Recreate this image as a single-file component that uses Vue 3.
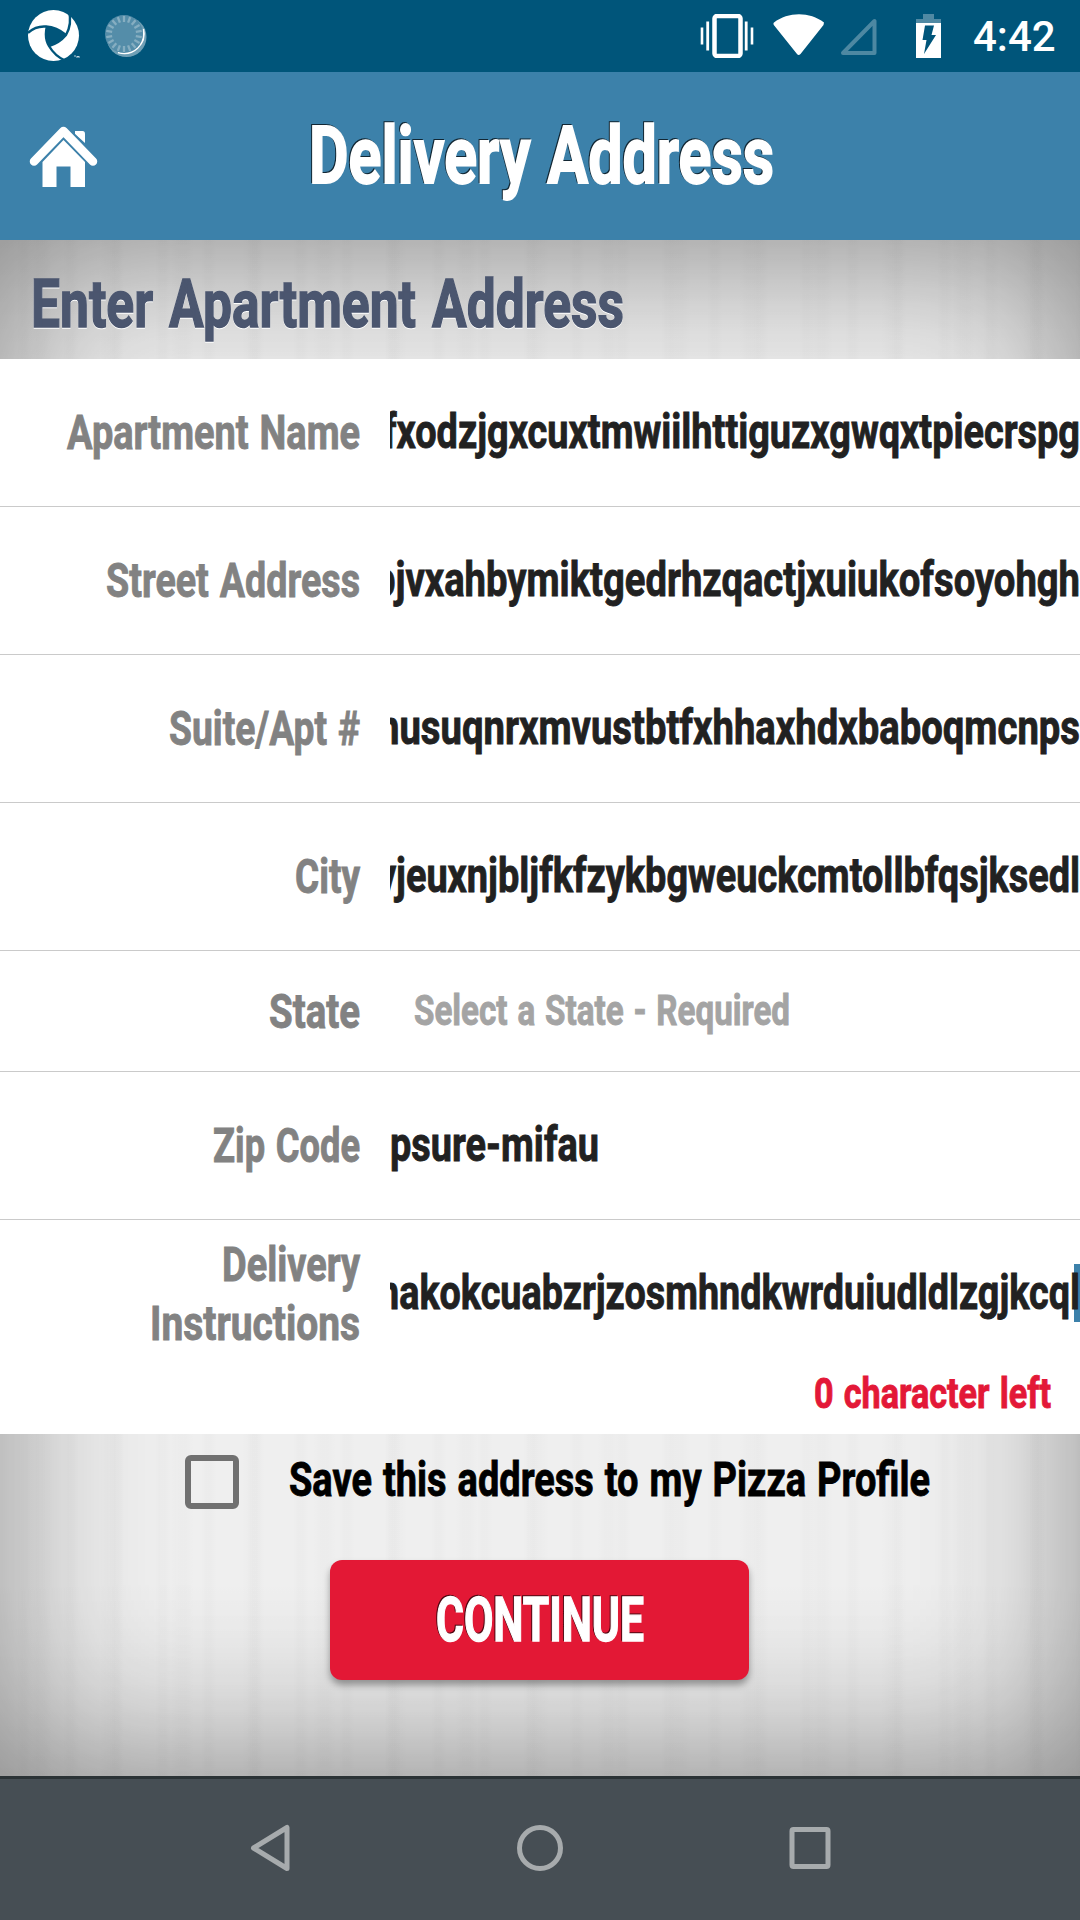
<script setup>
import { h } from 'vue'

// One line of condensed lettering, fitted to a fixed width.
const Fit = (props) => {
  const { text, w, size } = props
  return h('svg', { class: 'fit', width: w, height: size * 1.2 }, [
    h('text', {
      x: 0,
      y: size * 0.94,
      'font-size': size,
      textLength: w,
      lengthAdjust: 'spacingAndGlyphs',
    }, text),
  ])
}
Fit.props = ['text', 'w', 'size']

const label = 49
const rows = [
  { name: [['Apartment Name', 293]], value: 'fxodzjgxcuxtmwiilhttiguzxgwqxtpiecrspg', w: 697 },
  { name: [['Street Address', 254]], value: 'pjvxahbymiktgedrhzqactjxuiukofsoyohgh', w: 706 },
  { name: [['Suite/Apt #', 191]], value: 'nusuqnrxmvustbtfxhhaxhdxbaboqmcnps', w: 702 },
  { name: [['City', 65]], value: 'yjeuxnjbljfkfzykbgweuckcmtollbfqsjksedl', w: 703 },
  { name: [['State', 91]], select: 'Select a State - Required', w: 376 },
  { name: [['Zip Code', 147]], value: 'psure-mifau', w: 209, start: true },
  { name: [['Delivery', 138], ['Instructions', 210]], value: 'nakokcuabzrjzosmhndkwrduiudldlzgjkcql', w: 702, caret: true },
]
const ticks = Array.from({ length: 18 }, (_, i) => i * 20)
</script>

<template>
  <div class="screen">
    <div class="status">
      <svg class="swirl" width="52" height="52" viewBox="0 0 52 52">
        <circle cx="25.5" cy="25.5" r="25.5" fill="#fff" />
        <g fill="none" stroke="#00557a" stroke-width="2.4">
          <path d="M0 23C5 18 11 16 18 16.5C26 17 32 20 38 25" />
          <path d="M41 1C43 9 42 18 38 25C33 31 28 34 21 36" />
          <path d="M19 16C17 24 18 31 21 36C25 43 31 48 38 51" />
        </g>
        <path d="M19 16.5C26 17 32 20 38 25C33 31 28 34 21 36C18 31 17.500 24 19 16.500Z" fill="#00557a" />
        <path d="M46 46h2M49 48v-2l1 1 1-1v2" stroke="#dfeaf0" stroke-width=".8" fill="none" />
      </svg>
      <svg class="spin" width="44" height="44" viewBox="0 0 44 44">
        <circle cx="22.500" cy="23" r="20" fill="#6f9fb5" />
        <path d="M39.500 15A20 20 0 0 1 14 38.500A21 21 0 0 0 39.500 15Z" fill="#fff" stroke="#fff" stroke-width="1.500" />
        <circle cx="20" cy="20" r="19" fill="#548da9" />
        <g stroke="#86aec1" stroke-width="2.300">
          <line v-for="a in ticks" :key="a" x1="20" y1="2" x2="20" y2="8" :transform="`rotate(${a} 20 20)`" />
        </g>
      </svg>
      <span class="grow"></span>
      <svg width="54" height="44" viewBox="0 0 54 44" fill="none" stroke="#fff">
        <rect x="14.500" y="2" width="26" height="40" rx="2.500" stroke-width="4.500" />
        <path d="M2 13.500v17M52 13.500v17" stroke-width="2.600" />
        <path d="M7.700 7.500v29M46.200 7.500v29" stroke-width="2.800" />
      </svg>
      <svg class="wifi" width="52" height="42" viewBox="0 0 52 42">
        <path d="M1 8.500C15 -2.500 37 -2.500 51 8.500L50.500 11L27.500 40Q25.500 42 24 40L.8 11Q0 9.500 1 8.500Z" fill="#fff" />
      </svg>
      <svg class="signal" width="38" height="38" viewBox="0 0 38 38">
        <path d="M34.500 3V35H3Z" fill="none" stroke="#4d88a2" stroke-width="4" stroke-linejoin="round" />
      </svg>
      <svg class="battery" width="25" height="44" viewBox="0 0 25 44">
        <path d="M7 0h11v5h7v4H0V5h7Z" fill="#5089a3" />
        <path d="M0 9h25v35H0Z" fill="#fff" />
        <path d="M9 11.500H18L15.500 21H20L8 40L10.500 26H6.500Z" fill="#00557a" />
      </svg>
      <span class="time">4:42</span>
    </div>

    <header class="bar">
      <svg class="home" width="70" height="64" viewBox="0 0 70 64" fill="#fff">
        <path d="M46 6h7.500q2.500 0 2.500 3v9L46 9Z" />
        <path d="M5 36.500L34.500 6L64 36.500" fill="none" stroke="#3c81aa" stroke-width="12" stroke-linejoin="round" />
        <path d="M34.500 15L56 37V62H41.500V41.500H27.500V62H13.500V37Z" />
        <path d="M5 36.500L34.500 6L64 36.500" fill="none" stroke="#fff" stroke-width="8.500" stroke-linecap="round" stroke-linejoin="round" />
      </svg>
      <Fit class="title" text="Delivery Address" :w="465" :size="79" />
    </header>

    <main class="paper">
      <h1 class="heading"><Fit text="Enter Apartment Address" :w="593" :size="67" /></h1>

      <section class="form">
        <div v-for="r in rows" :key="r.name[0][0]" class="row" :class="{ short: r.select, last: r.caret }">
          <div class="name">
            <Fit v-for="n in r.name" :key="n[0]" :text="n[0]" :w="n[1]" :size="label" />
          </div>
          <div v-if="r.select" class="select"><Fit :text="r.select" :w="r.w" :size="42" /></div>
          <div v-else class="value" :class="{ start: r.start, caret: r.caret }">
            <Fit :text="r.value" :w="r.w" :size="label" />
          </div>
        </div>
        <div class="count"><Fit text="0 character left" :w="237" :size="42" /></div>
      </section>

      <div class="save">
        <span class="box"></span>
        <Fit class="savetext" text="Save this address to my Pizza Profile" :w="641" :size="label" />
      </div>
      <div class="button"><Fit text="CONTINUE" :w="208" :size="62" /></div>
    </main>

    <nav class="nav">
      <svg width="46" height="48" viewBox="0 0 46 48"><path d="M40 3.500V44.500L6.500 24Z" /></svg>
      <svg width="46" height="48" viewBox="0 0 46 48"><circle cx="23" cy="24" r="20.500" /></svg>
      <svg width="46" height="48" viewBox="0 0 46 48"><rect x="5" y="5.500" width="36" height="37" rx="1.500" /></svg>
    </nav>
  </div>
</template>

<style>
body { margin: 0; }
</style>

<style scoped>
.screen {
  width: 1080px;
  height: 1920px;
  display: flex;
  flex-direction: column;
  overflow: hidden;
  font-family: Roboto, "Liberation Sans", sans-serif;
}
.screen svg { display: block; flex: none; }
.fit {
  overflow: visible;
  fill: currentColor;
  stroke: currentColor;
  stroke-width: 0.9px;
  font-weight: 700;
  word-spacing: 0.13em;
}
.status {
  height: 72px;
  box-sizing: border-box;
  padding: 0 25px 0 28px;
  display: flex;
  align-items: center;
  background: #00557a;
  color: #fff;
}
.spin { margin: 0 0 1px 24px; }
.grow { flex: 1; }
.wifi { margin: 0 0 3px 19px; }
.signal { margin: 2px 0 0 15px; }
.battery { margin-left: 38px; }
.time { margin-left: 32px; padding-top: 2px; font-size: 42px; font-weight: 500; line-height: 70px; width: 82px; white-space: nowrap; }
.bar {
  height: 168px;
  display: grid;
  grid-template-columns: 130px 1fr 130px;
  align-items: center;
  background: #3c81aa;
  color: #fff;
}
.home { margin: 2px 0 0 29px; }
.title {
  justify-self: center;
  margin-left: 2px;
  stroke-width: 1.8px;
  filter: drop-shadow(-1px -1px 0.6px rgba(0, 0, 0, 0.7));
}
.paper {
  position: relative;
  height: 1536px;
  background:
    linear-gradient(rgba(0, 0, 0, 0.06), transparent 190px, transparent 1340px, rgba(0, 0, 0, 0.06)),
    repeating-linear-gradient(90deg, transparent 0 17px, rgba(0, 0, 0, 0.01) 22px 27px, transparent 33px 46px),
    repeating-linear-gradient(90deg, transparent 0 29px, rgba(0, 0, 0, 0.01) 37px 44px, transparent 52px 71px),
    #efefef;
  box-shadow: inset 0 0 160px rgba(0, 0, 0, 0.41);
}
.heading {
  margin: 0;
  height: 119px;
  box-sizing: border-box;
  padding: 9px 0 0 31px;
  display: flex;
  align-items: center;
  color: #4b566f;
}
.heading .fit { stroke-width: 1.5px; filter: drop-shadow(0 1px 0.5px #fff); }
.form { height: 1075px; background: #fff; }
.row {
  height: 148px;
  box-sizing: border-box;
  border-bottom: 1px solid #cacaca;
  display: flex;
  align-items: center;
}
.row.short { height: 121px; }
.row.last { height: 147px; border: 0; }
.name {
  width: 360px;
  margin-right: 30px;
  display: flex;
  flex-direction: column;
  align-items: flex-end;
  color: #828282;
}
.value {
  width: 690px;
  height: 60px;
  margin-bottom: 2px;
  display: flex;
  align-items: center;
  justify-content: flex-end;
  overflow: hidden;
  color: #212121;
}
.value.start { justify-content: flex-start; }
.value.caret { background: linear-gradient(#3c81aa, #3c81aa) right / 6px 58px no-repeat; }
.select { padding: 1px 0 0 24px; color: #a4a4a4; }
.count {
  height: 67px;
  box-sizing: border-box;
  padding: 2px 29px 0 0;
  display: flex;
  justify-content: flex-end;
  align-items: flex-start;
  color: #e31837;
}
.save {
  height: 96px;
  padding-left: 185px;
  display: flex;
  align-items: center;
  color: #000;
}
.box {
  width: 42px;
  height: 42px;
  border: 6px solid #707070;
  border-radius: 6px;
}
.savetext { margin: 0 0 5px 50px; }
.button {
  width: 419px;
  height: 120px;
  margin: 30px 0 0 330px;
  display: flex;
  align-items: center;
  justify-content: center;
  border-radius: 12px;
  background: #e31835;
  color: #fff;
  box-shadow: 0 5px 7px rgba(0, 0, 0, 0.35);
}
.button .fit { stroke-width: 1.4px; filter: drop-shadow(-1px -1px 0.6px rgba(0, 0, 0, 0.65)); }
.nav {
  height: 144px;
  box-sizing: border-box;
  border-top: 3px solid #2b3336;
  padding: 0 247px 3px;
  display: flex;
  align-items: center;
  justify-content: space-between;
  background: #464e54;
}
.nav svg { fill: none; stroke: #a7abad; stroke-width: 5; stroke-linejoin: round; }
</style>
